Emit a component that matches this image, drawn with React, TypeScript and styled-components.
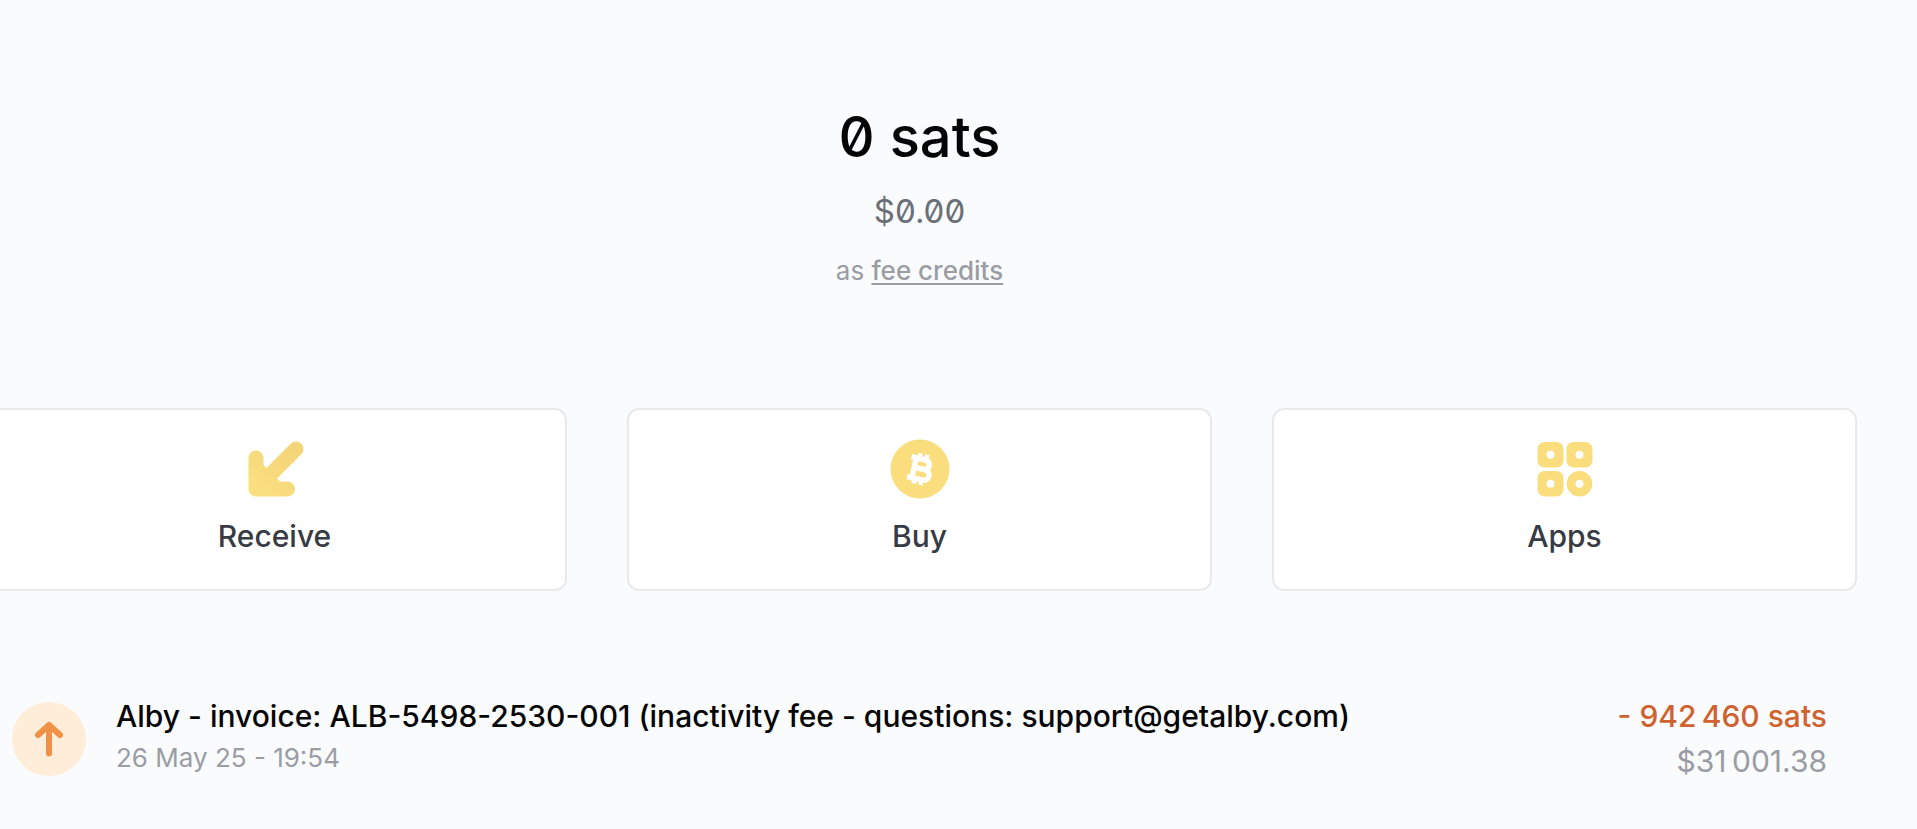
import React from "react";
import styled, { createGlobalStyle } from "styled-components";

const GlobalStyle = createGlobalStyle`
  * { box-sizing: border-box; }
  body {
    margin: 0;
    background: #fafbfd;
    font-family: Inter, "Liberation Sans", sans-serif;
    font-optical-sizing: none;
    overflow-x: clip;
  }
`;

const Page = styled.main`
  padding-top: 105px;
  padding-right: 60px;
  overflow-x: clip;
`;

const Wide = styled.div`
  margin-left: -18px;
`;

const Balance = styled.section`
  display: flex;
  flex-direction: column;
  align-items: center;
  font-feature-settings: "zero";
`;

const Sats = styled.h1`
  margin: 0;
  font-size: 56px;
  line-height: 64px;
  font-weight: 500;
  color: #050505;
`;

const Fiat = styled.p`
  margin: 18px 0 0;
  font-size: 33px;
  line-height: 48px;
  color: #6b7078;
`;

const Credits = styled.p`
  margin: 18px 0 0;
  font-size: 26px;
  line-height: 36px;
  color: #9b9da4;
`;

const CreditsLink = styled.a`
  color: inherit;
  font-weight: 500;
  text-decoration: underline;
  text-decoration-thickness: 2px;
  text-underline-offset: 3px;
`;

const Actions = styled.nav`
  display: grid;
  grid-template-columns: repeat(3, 1fr);
  gap: 60px;
  margin-top: 119px;
`;

const ActionCard = styled.button`
  display: flex;
  flex-direction: column;
  align-items: center;
  gap: 14px;
  padding: 27px 24px 32px;
  border: 2px solid #e9e9ec;
  border-radius: 12px;
  background: #fff;
  color: #373b43;
  font-family: inherit;
  font-size: 30px;
  line-height: 42px;
  font-weight: 500;
`;

const Transactions = styled.ul`
  list-style: none;
  margin: 103px 0 0;
  padding: 0 30px;
`;

const Transaction = styled.li`
  display: flex;
  align-items: flex-start;
`;

const Direction = styled.span`
  display: grid;
  place-items: center;
  flex: none;
  width: 74px;
  height: 74px;
  margin: 8px 30px 0 0;
  border-radius: 50%;
  background: #feeed9;
`;

const Details = styled.div`
  flex: 1;
  min-width: 0;
`;

const Amounts = styled.div`
  text-align: right;
  white-space: nowrap;
`;

const Line = styled.p<{ $tone: string; $strong?: boolean; $small?: boolean }>`
  margin: 0;
  color: ${(p) => p.$tone};
  font-size: ${(p) => (p.$small ? 26 : 30)}px;
  font-weight: ${(p) => (p.$strong ? 500 : 400)};
  line-height: ${(p) => (p.$small ? 40 : p.$strong ? 44 : 46)}px;
`;

const ReceiveIcon = () => (
  <svg width="64" height="64" viewBox="0 0 64 64" fill="none" aria-hidden="true">
    <defs>
      <linearGradient id="receive" x1="54" y1="4" x2="14" y2="60" gradientUnits="userSpaceOnUse">
        <stop stopColor="#f3d377" />
        <stop offset="1" stopColor="#fbe080" />
      </linearGradient>
    </defs>
    <path
      d="M13 21V52H44.500M13 52L53 12M15 33L33 51L15 51Z"
      stroke="url(#receive)"
      strokeWidth="15"
      strokeLinecap="round"
      strokeLinejoin="round"
    />
  </svg>
);

const BitcoinIcon = () => (
  <svg width="64" height="64" viewBox="0 0 64 64" fill="none" aria-hidden="true">
    <circle cx="32" cy="32" r="29.500" fill="#fadd7c" />
    <g transform="rotate(13 32 32)" stroke="#fff" strokeWidth="5.500">
      <path d="M21 22H35.500A4.800 4.800 0 0 1 35.500 31.600H28M35.500 31.600H37A5.300 5.300 0 0 1 37 42.200H21M26 22V42.200" strokeLinejoin="round" />
      <path d="M29 16.500V21M36 16.500V21M29 43V47.500M36 43V47.500" strokeWidth="4.500" />
    </g>
  </svg>
);

const AppsIcon = () => (
  <svg width="64" height="64" viewBox="0 0 64 64" aria-hidden="true">
    <g fill="#fadd7c">
      <rect x="4.500" y="5" width="26" height="25.500" rx="7" />
      <rect x="33.500" y="5" width="26" height="25.500" rx="7" />
      <rect x="4.500" y="34" width="26" height="25.500" rx="7" />
      <circle cx="46.500" cy="46.700" r="12.800" />
    </g>
    <g fill="#fff">
      <circle cx="17.500" cy="17.800" r="4" />
      <circle cx="46.500" cy="17.800" r="4" />
      <circle cx="17.500" cy="46.700" r="4" />
      <circle cx="46.500" cy="46.700" r="4" />
    </g>
  </svg>
);

const SentIcon = () => (
  <svg width="36" height="36" viewBox="0 0 36 36" fill="none" aria-hidden="true">
    <path d="M18 32.500V4M7 14L18 4L29 14" stroke="#ef9146" strokeWidth="6" strokeLinecap="round" strokeLinejoin="round" />
  </svg>
);

const actions = [
  { label: "Receive", icon: <ReceiveIcon /> },
  { label: "Buy", icon: <BitcoinIcon /> },
  { label: "Apps", icon: <AppsIcon /> },
];

export default function App() {
  return (
    <Page>
      <GlobalStyle />
      <Wide>
        <Balance>
          <Sats>0 sats</Sats>
          <Fiat>$0.00</Fiat>
          <Credits>
            as <CreditsLink href="#fee-credits">fee credits</CreditsLink>
          </Credits>
        </Balance>
        <Actions>
          {actions.map((a) => (
            <ActionCard key={a.label} type="button">
              {a.icon}
              {a.label}
            </ActionCard>
          ))}
        </Actions>
        <Transactions>
          <Transaction>
            <Direction>
              <SentIcon />
            </Direction>
            <Details>
              <Line $tone="#050505" $strong>
                Alby - invoice: ALB-5498-2530-001 (inactivity fee - questions: support@getalby.com)
              </Line>
              <Line $tone="#9b9da4" $small>
                26 May 25 - 19:54
              </Line>
            </Details>
            <Amounts>
              <Line $tone="#cf622f" $strong>
                - 942{"\u202f"}460 sats
              </Line>
              <Line $tone="#999ca3">$31{"\u202f"}001.38</Line>
            </Amounts>
          </Transaction>
        </Transactions>
      </Wide>
    </Page>
  );
}
